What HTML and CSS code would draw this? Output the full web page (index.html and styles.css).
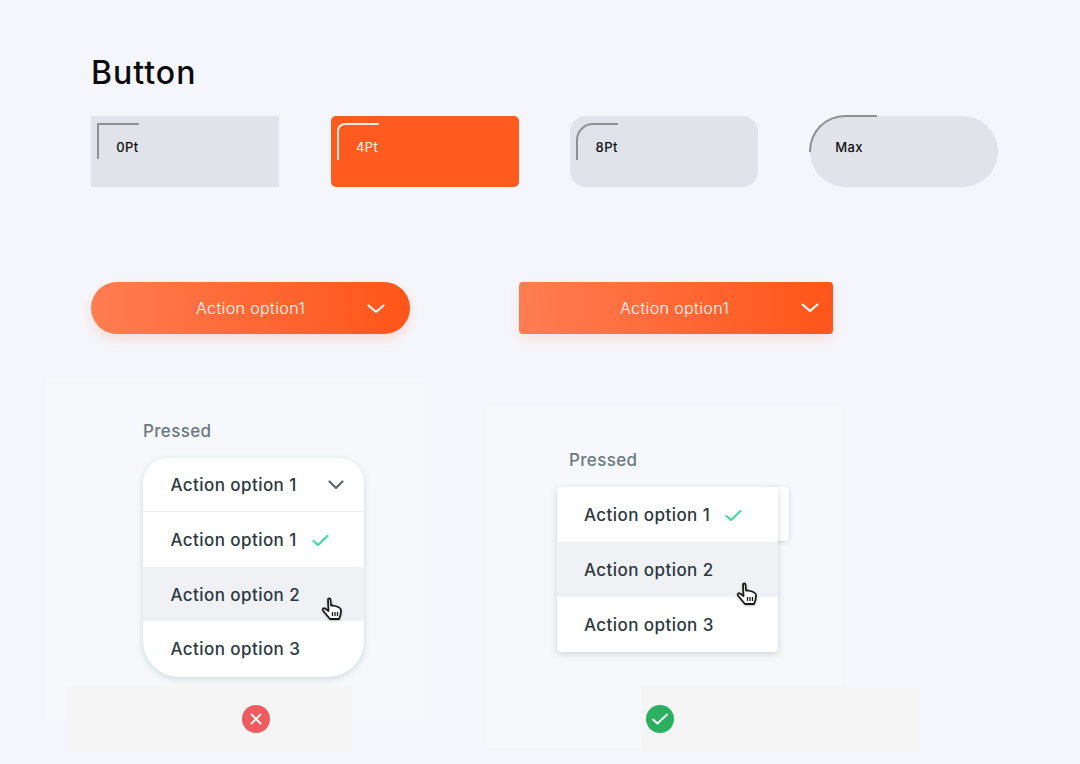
FILE: index.html
```html
<!DOCTYPE html>
<html lang="en">
<head>
<meta charset="utf-8">
<title>Button</title>
<link rel="stylesheet" href="styles.css">
</head>
<body>
<main class="page">
  <h1 class="title">Button</h1>

  <section class="swatches">
    <div class="swatch r0"><span class="corner corner-0"></span>0Pt</div>
    <div class="swatch r4"><span class="corner corner-4"></span>4Pt</div>
    <div class="swatch r8"><span class="corner corner-8"></span>8Pt</div>
    <div class="swatch rmax"><span class="corner corner-max"></span>Max</div>
  </section>

  <section class="actions">
    <button class="action action-pill">
      <span class="action-label">Action option1</span>
      <svg class="action-chevron" width="18" height="10" viewBox="0 0 18 10"><path d="M1.5 1.5 L9 8 L16.5 1.5" fill="none" stroke="#fff" stroke-width="2" stroke-linecap="round" stroke-linejoin="round"/></svg>
    </button>
    <button class="action action-square">
      <span class="action-label">Action option1</span>
      <svg class="action-chevron" width="18" height="10" viewBox="0 0 18 10"><path d="M1.5 1.5 L9 8 L16.5 1.5" fill="none" stroke="#fff" stroke-width="2" stroke-linecap="round" stroke-linejoin="round"/></svg>
    </button>
  </section>

  <section class="demos">
    <article class="panel panel-bad">
      <p class="pressed">Pressed</p>
      <div class="menu menu-round">
        <div class="row row-head">
          <span>Action option 1</span>
          <svg class="head-chevron" width="16" height="10" viewBox="0 0 16 10"><path d="M1.5 1.5 L8 8 L14.5 1.5" fill="none" stroke="#5c6870" stroke-width="2.2" stroke-linecap="round" stroke-linejoin="round"/></svg>
        </div>
        <div class="row">
          <span>Action option 1</span>
          <svg class="check" width="17" height="13" viewBox="0 0 17 13"><path d="M1.5 7 L6 11 L15.5 2" fill="none" stroke="#3ddc9f" stroke-width="2.2" stroke-linecap="round" stroke-linejoin="round"/></svg>
        </div>
        <div class="row row-hover">
          <span>Action option 2</span>
          <svg class="hand" width="22" height="24" viewBox="0 0 22 24"><path d="M7 2.5 C7 1 9.5 1 9.5 2.5 L10 8.5 L12 8.5 L14 9 L16 9.5 L18 10.5 C19.5 11 20 12 20 13.5 L19.5 18 L18 22 L9 22 L6.5 19 L2 13.5 C1 12 2.5 10.5 4 11.5 L7.5 14 Z" fill="#fff" stroke="#1a1a1a" stroke-width="1.8" stroke-linejoin="round"/><path d="M11.5 15 V19 M14 15 V19 M16.500 15 V19" stroke="#1a1a1a" stroke-width="1.3"/></svg>
        </div>
        <div class="row"><span>Action option 3</span></div>
      </div>
      <div class="verdict verdict-bad">
        <svg width="28" height="28" viewBox="0 0 28 28"><circle cx="14" cy="14" r="14" fill="#ef5b5e"/><path d="M9.500 9.500 L18.500 18.500 M18.500 9.500 L9.500 18.500" stroke="#fff" stroke-width="1.800" stroke-linecap="round"/></svg>
      </div>
    </article>

    <article class="panel panel-good">
      <p class="pressed">Pressed</p>
      <div class="menu-stack">
        <div class="menu-back"></div>
        <div class="menu menu-square">
          <div class="row">
            <span>Action option 1</span>
            <svg class="check" width="17" height="13" viewBox="0 0 17 13"><path d="M1.5 7 L6 11 L15.5 2" fill="none" stroke="#3ddc9f" stroke-width="2.2" stroke-linecap="round" stroke-linejoin="round"/></svg>
          </div>
          <div class="row row-hover">
            <span>Action option 2</span>
            <svg class="hand" width="22" height="24" viewBox="0 0 22 24"><path d="M7 2.5 C7 1 9.5 1 9.5 2.5 L10 8.5 L12 8.5 L14 9 L16 9.5 L18 10.5 C19.5 11 20 12 20 13.5 L19.5 18 L18 22 L9 22 L6.5 19 L2 13.5 C1 12 2.5 10.5 4 11.5 L7.5 14 Z" fill="#fff" stroke="#1a1a1a" stroke-width="1.8" stroke-linejoin="round"/><path d="M11.5 15 V19 M14 15 V19 M16.500 15 V19" stroke="#1a1a1a" stroke-width="1.3"/></svg>
          </div>
          <div class="row"><span>Action option 3</span></div>
        </div>
      </div>
      <div class="verdict verdict-good">
        <svg width="28" height="28" viewBox="0 0 28 28"><circle cx="14" cy="14" r="14" fill="#2bb062"/><path d="M7 14.500 L11.500 18.500 L21 9.500" fill="none" stroke="#fff" stroke-width="1.800" stroke-linecap="round" stroke-linejoin="round"/></svg>
      </div>
    </article>
  </section>
</main>
</body>
</html>
```
FILE: styles.css
```css
* { box-sizing: border-box; }

html, body {
  margin: 0;
  height: 764px;
  overflow: hidden;
  background: #f5f6fb;
  font-family: Inter, "Noto Sans", sans-serif;
}

.page {
  padding-top: 52px;
}

.title {
  margin: 0 0 24px 91px;
  height: 40px;
  font-size: 32px;
  line-height: 41px;
  font-weight: 500;
  letter-spacing: 1px;
  color: #0b0b0c;
}

.swatches {
  display: grid;
  grid-template-columns: repeat(4, 188px);
  column-gap: 51.670px;
  margin-left: 91px;
}

.swatch {
  position: relative;
  height: 71px;
  padding: 23px 0 0 25.300px;
  background: #e1e2ea;
  color: #111;
  font-size: 13px;
  line-height: 16px;
  font-weight: 500;
  letter-spacing: 0.4px;
}

.r0 { border-radius: 0; }
.r4 { border-radius: 5px; background: #ff5a1f; color: #fff; font-weight: 400; }
.r8 { border-radius: 16px; }
.rmax { border-radius: 36px; }

.corner {
  position: absolute;
  border-top: 2px solid #8f8f93;
  border-left: 2px solid #8f8f93;
}

.corner-0 { left: 6px; top: 7px; width: 42px; height: 36px; }
.corner-4 { left: 6px; top: 6.500px; width: 42px; height: 37px; border-color: #ffe9e0; border-top-left-radius: 8px; }
.corner-8 { left: 6px; top: 6.500px; width: 42px; height: 37px; border-top-left-radius: 17px; }
.corner-max { left: -1px; top: -1px; width: 68px; height: 37px; border-top-left-radius: 36px; }

.actions {
  display: flex;
  gap: 109px;
  margin: 95px 0 0 91px;
}

.action {
  position: relative;
  display: block;
  height: 51.500px;
  padding: 0;
  border: 0;
  color: #fff;
  background: linear-gradient(90deg, #ff7d52 0%, #ff5519 100%);
  font: 300 16px/53px Inter, "Noto Sans", sans-serif;
  letter-spacing: 0.38px;
}

.action-pill {
  width: 319px;
  border-radius: 26px;
  box-shadow: 0 5px 12px rgba(255, 96, 40, 0.18);
}

.action-square {
  width: 314px;
  border-radius: 4px;
  box-shadow: 0 6px 14px rgba(255, 96, 40, 0.12);
}

.action-label {
  position: absolute;
  top: 0;
  white-space: nowrap;
}

.action-pill .action-label { left: 105px; }
.action-square .action-label { left: 101px; }

.action-chevron { position: absolute; top: 22px; }
.action-pill .action-chevron { left: 276px; }
.action-square .action-chevron { left: 282px; top: 21px; }

.demos {
  display: flex;
  align-items: flex-start;
  gap: 62px;
  margin: 45px 0 0 45px;
}

.panel {
  position: relative;
  height: 341px;
}

.panel-bad {
  width: 379px;
  padding: 41px 0 0 98px;
  background: #f7f8fb;
}

.panel-good {
  width: 356px;
  margin-top: 28px;
  padding: 42px 0 0 83px;
  background: #f7f8fc;
}

.pressed {
  margin: 0 0 16px;
  height: 22px;
  font-size: 17px;
  line-height: 22px;
  font-weight: 500;
  color: #6a7880;
  letter-spacing: 0.35px;
}

.menu {
  width: 221px;
  overflow: hidden;
  background: #fff;
  color: #2b3840;
  font-size: 17px;
  font-weight: 500;
}

.menu-round {
  border-radius: 24px 24px 36px 36px;
  box-shadow: 0 2px 6px rgba(60, 130, 125, 0.24);
}

.menu-square {
  position: relative;
  border-radius: 4px;
  box-shadow: 0 2px 7px rgba(40, 60, 70, 0.2);
}

.menu-stack {
  position: relative;
  width: 232px;
  margin-left: -12px;
}

.menu-back {
  position: absolute;
  top: 0;
  right: 0;
  width: 24px;
  height: 54px;
  border-radius: 4px;
  background: #fff;
  box-shadow: 0 1px 4px rgba(40, 60, 70, 0.18);
}

.row {
  display: flex;
  align-items: center;
  position: relative;
  height: 55px;
  padding: 2px 0 0 27.500px;
  letter-spacing: 0.43px;
}

.menu-square .row { padding-left: 27px; }

.row-hover { background: #eff1f4; }

.row-head {
  height: 54px;
  border-bottom: 1px solid #eceef0;
}

.menu-round .row-hover { height: 54px; }
.menu-round .row:last-child { height: 56px; padding-top: 0; }

.head-chevron { position: absolute; left: 185px; top: 22px; }
.check { margin-left: 15px; }
.hand { position: absolute; left: 178px; top: 30px; filter: drop-shadow(0 1px 1px rgba(0, 0, 0, 0.25)); }
.menu-square .hand { left: 179px; top: 40px; }

.verdict {
  position: absolute;
  display: flex;
  align-items: center;
  height: 65px;
}

.verdict-bad {
  left: 22px;
  top: 308px;
  width: 285px;
  padding-left: 175px;
  background: #f6f5f6;
}

.verdict-good {
  left: 155px;
  top: 280px;
  width: 279px;
  padding-left: 5px;
  background: #f5f5f5;
}
```
